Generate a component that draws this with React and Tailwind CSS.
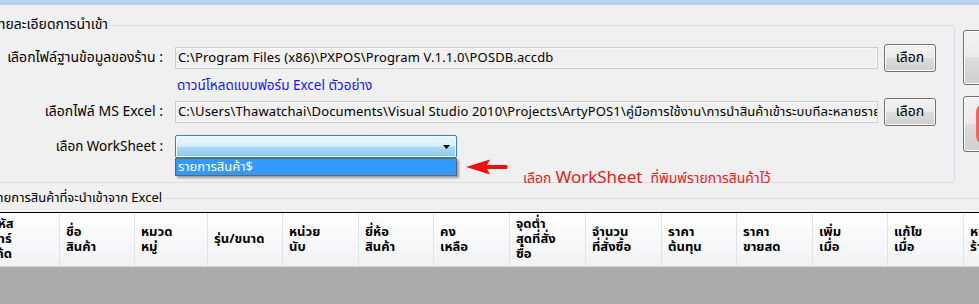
const headers = [
  ["รหัส", "บาร์", "โค้ด"],
  ["ชื่อ", "สินค้า"],
  ["หมวด", "หมู่"],
  ["รุ่น/ขนาด"],
  ["หน่วย", "นับ"],
  ["ยี่ห้อ", "สินค้า"],
  ["คง", "เหลือ"],
  ["จุดต่ำ", "สุดที่สั่ง", "ซื้อ"],
  ["จำนวน", "ที่สั่งซื้อ"],
  ["ราคา", "ต้นทุน"],
  ["ราคา", "ขายสด"],
  ["เพิ่ม", "เมื่อ"],
  ["แก้ไข", "เมื่อ"],
  ["หน้า", "ร้าน"],
];

const widths = ["w-[75px]", "w-[75px]", "w-[73px]", "w-[75px]", "w-[76px]", "w-[75px]", "w-[76px]", "w-[76px]", "w-[76px]", "w-[75px]", "w-[76px]", "w-[75px]", "w-[76px]", "w-[76px]"];

function WinButton({ children, className = "" }) {
  return (
    <div
      className={
        "flex items-center justify-center border border-[#707070] rounded-[3px] bg-[linear-gradient(#f2f2f2,#ebebeb_50%,#dddddd_50%,#cfcfcf)] shadow-[inset_0_0_0_1px_#fcfcfc] text-[14px] text-black " +
        className
      }
    >
      {children}
    </div>
  );
}

function PathBox({ children }) {
  return (
    <div className="w-[703px] h-[22px] border border-[#c9cdd2] shadow-[inset_0_0_0_1px_#fafafa] bg-[#f0f0f0] flex items-center px-[2px] overflow-hidden whitespace-nowrap text-[13px] tracking-[0.15px] text-black">
      {children}
    </div>
  );
}

export default function App() {
  return (
    <div className="relative w-[979px] h-[304px] overflow-hidden bg-[#f0f0f0] flex flex-col font-[Tahoma,'Noto_Sans_Thai','Liberation_Sans',sans-serif] text-[13.5px] text-black leading-[16px]">
      <div className="h-[5px] shrink-0 bg-[#b9d1ea]" />

      <div className="flex items-start mt-[12px] shrink-0">
        <fieldset className="relative ml-[-16px] w-[971px] h-[166px] shrink-0 border border-[#d5dfe5] rounded-[3px]">
          <legend className="ml-[7px] px-[1px] leading-[16px] whitespace-nowrap text-[14px]">รายละเอียดการนำเข้า</legend>

          <div className="flex items-center h-[28px] mt-[11px]">
            <div className="w-[180px] text-right pr-[2px] whitespace-nowrap text-[14px]">เลือกไฟล์ฐานข้อมูลของร้าน :</div>
            <div className="ml-[10px]">
              <PathBox>C:\Program Files (x86)\PXPOS\Program V.1.1.0\POSDB.accdb</PathBox>
            </div>
            <WinButton className="ml-[6px] w-[52px] h-[28px]">เลือก</WinButton>
          </div>

          <div className="flex h-[16px] mt-[6px]">
            <div className="ml-[192px] text-[#1414ff] whitespace-nowrap">ดาวน์โหลดแบบฟอร์ม Excel ตัวอย่าง</div>
          </div>

          <div className="flex items-center h-[28px] mt-[4px]">
            <div className="w-[180px] text-right pr-[2px] whitespace-nowrap text-[14px]">เลือกไฟล์ MS Excel :</div>
            <div className="ml-[10px]">
              <PathBox>C:\Users\Thawatchai\Documents\Visual Studio 2010\Projects\ArtyPOS1\คู่มือการใช้งาน\การนำสินค้าเข้าระบบทีละหลายรายการ</PathBox>
            </div>
            <WinButton className="ml-[6px] w-[52px] h-[28px]">เลือก</WinButton>
          </div>

          <div className="flex items-center h-[23px] mt-[9px]">
            <div className="w-[180px] text-right pr-[2px] whitespace-nowrap text-[13.5px]">เลือก WorkSheet :</div>
            <div className="relative ml-[10px]">
              <div className="w-[282px] h-[23px] border border-[#3c7fb1] rounded-[2px] bg-[linear-gradient(#eaf6fd,#d9f0fc_45%,#a9d9f6_55%,#8cc6ec)] shadow-[inset_0_0_0_1px_#f4fbff] flex items-center justify-end pr-[6px]">
                <svg width="7" height="4" viewBox="0 0 7 4">
                  <path d="M0 0h7L3.5 4z" fill="#000" />
                </svg>
              </div>
              <div className="absolute left-0 top-[23px] w-[282px] h-[18px] bg-[#3399ff] border border-[#646464] shadow-[2px_2px_2px_rgba(0,0,0,0.35)] text-white text-[13px] px-[2px] flex items-center whitespace-nowrap">
                รายการสินค้า$
              </div>
            </div>
          </div>
        </fieldset>

        <div className="ml-[8px] mt-[13px] flex flex-col gap-[11px]">
          <WinButton className="w-[60px] h-[55px]" />
          <WinButton className="w-[60px] h-[56px] justify-start pl-[12px]">
            <div className="w-[30px] h-[40px] rounded-[8px] bg-[linear-gradient(90deg,#ff6a6a,#d40000_40%,#a00000)]" />
          </WinButton>
        </div>
      </div>

      <fieldset className="mt-[7px] ml-[-16px] w-[1010px] h-[140px] shrink-0 border border-[#d5dfe5] rounded-[3px]">
        <legend className="ml-[6px] px-[1px] leading-[16px] whitespace-nowrap text-[13px]">รายการสินค้าที่จะนำเข้าจาก Excel</legend>
        <div className="mt-[6px] border-t border-black">
          <div className="flex h-[54px] bg-[linear-gradient(#ffffff,#fbfbfc_30%,#f1f2f4)] border-b border-[#d6d6d6]">
            {headers.map((lines, i) => (
              <div
                key={i}
                className={widths[i] + " shrink-0 h-full border-r border-[#e2e3e5] pl-[6px] flex flex-col justify-center font-bold text-[13px] leading-[15px] whitespace-nowrap overflow-hidden"}
              >
                {lines.map((l, j) => (
                  <div key={j}>{l}</div>
                ))}
              </div>
            ))}
          </div>
          <div className="h-[60px] bg-[#ababab]" />
        </div>
      </fieldset>

      <svg width="42" height="16" viewBox="0 0 42 16" className="absolute left-[466px] top-[159px]">
        <path d="M0 8 L24 0.5 L21 6 L41 6 Q42 8 41 10 L21 10 L24 15.5 Z" fill="#f01010" />
      </svg>
      <div className="absolute left-[523px] top-[168px] flex items-baseline text-[#f01818] whitespace-nowrap leading-[20px] text-[14px]">
        <span>เลือก</span>
        <span className="ml-[4px] text-[17px]">WorkSheet</span>
        <span className="ml-[8px]">ที่พิมพ์รายการสินค้าไว้</span>
      </div>
    </div>
  );
}
